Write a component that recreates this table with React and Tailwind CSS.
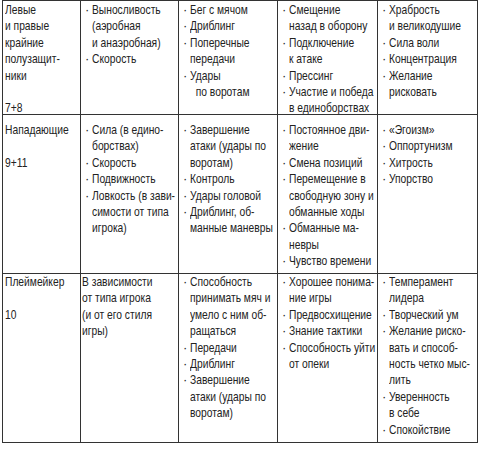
const rows = [
  {
    h: 'h-[114px]',
    pt: 'pt-[1px]',
    cells: [
      { plain: ['Левые', 'и правые', 'крайние', 'полузащит-', 'ники', '', '7+8'], pl: 'pl-[2px]' },
      { items: [['Выносливость', '(аэробная', 'и анаэробная)'], ['Скорость']] },
      { items: [['Бег с мячом'], ['Дриблинг'], ['Поперечные', 'передачи'], ['Удары', '  по воротам']] },
      { items: [['Смещение', 'назад в оборону'], ['Подключение', 'к атаке'], ['Прессинг'], ['Участие и победа', 'в единоборствах']] },
      { items: [['Храбрость', 'и великодушие'], ['Сила воли'], ['Концентрация'], ['Желание', 'рисковать']] },
    ],
  },
  {
    h: 'h-[159px]',
    pt: 'pt-[7px]',
    cells: [
      { plain: ['Нападающие', '', '9+11'], pl: 'pl-[2px]' },
      { items: [['Сила (в едино-', 'борствах)'], ['Скорость'], ['Подвижность'], ['Ловкость (в зави-', 'симости от типа', 'игрока)']] },
      { items: [['Завершение', 'атаки (удары по', 'воротам)'], ['Контроль'], ['Удары головой'], ['Дриблинг, об-', 'манные маневры']] },
      { items: [['Постоянное дви-', 'жение'], ['Смена позиций'], ['Перемещение в', 'свободную зону и', 'обманные ходы'], ['Обманные ма-', 'невры'], ['Чувство времени']] },
      { items: [['«Эгоизм»'], ['Оппортунизм'], ['Хитрость'], ['Упорство']] },
    ],
  },
  {
    h: 'h-[169px]',
    pt: 'pt-[0px]',
    cells: [
      { plain: ['Плеймейкер', '', '10'], pl: 'pl-[2px]' },
      { plain: ['В зависимости', 'от типа игрока', '(и от его стиля', 'игры)'], pl: 'pl-[1px]' },
      { items: [['Способность', 'принимать мяч и', 'умело с ним об-', 'ращаться'], ['Передачи'], ['Дриблинг'], ['Завершение', 'атаки (удары по', 'воротам)']] },
      { items: [['Хорошее понима-', 'ние игры'], ['Предвосхищение'], ['Знание тактики'], ['Способность уйти', 'от опеки']] },
      { items: [['Темперамент', 'лидера'], ['Творческий ум'], ['Желание риско-', 'вать и способ-', 'ность четко мыс-', 'лить'], ['Уверенность', 'в себе'], ['Спокойствие']] },
    ],
  },
];

// no narrow face installed, so the condensed look comes from a horizontal scale
const Lines = ({ lines }) => (
  <div className="min-w-0 flex-1">
    {lines.map((line, i) => (
      <div key={i} className="w-[125%] whitespace-pre origin-left scale-x-[0.79]">
        {line || '\u00a0'}
      </div>
    ))}
  </div>
);

const Cell = ({ cell, h, pt }) => (
  <div className={`${h} ${pt} border-r border-b border-[#333] overflow-hidden`}>
    {cell.plain ? (
      <div className={`${cell.pl} flex`}>
        <Lines lines={cell.plain} />
      </div>
    ) : (
      <div className="pl-[4px]">
        {cell.items.map((lines, i) => (
          <div key={i} className="flex">
            <span className="w-[7px] shrink-0">·</span>
            <Lines lines={lines} />
          </div>
        ))}
      </div>
    )}
  </div>
);

export default function App() {
  return (
    <div
      className="w-[482px] h-[450px] bg-white text-[#222] text-[13px] leading-[16.4px] pl-[2px]"
      style={{ fontFamily: '"Liberation Sans", Arial, sans-serif' }}
    >
      <div className="grid w-[476px] grid-cols-[78px_98px_99px_100px_100px] border-l border-t border-[#333]">
        {rows.map((row, r) =>
          row.cells.map((cell, c) => <Cell key={`${r}-${c}`} cell={cell} h={row.h} pt={row.pt} />)
        )}
      </div>
    </div>
  );
}
